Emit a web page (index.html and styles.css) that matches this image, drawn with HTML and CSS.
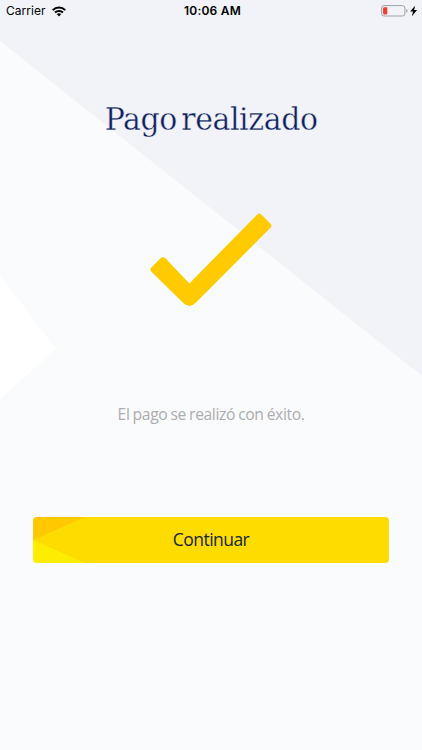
FILE: index.html
```html
<!DOCTYPE html>
<html lang="es">
<head>
<meta charset="utf-8">
<meta name="viewport" content="width=device-width, initial-scale=1">
<title>Pago realizado</title>
<link rel="stylesheet" href="styles.css">
</head>
<body>
<div class="screen">
  <svg class="backdrop" viewBox="0 0 422 750" aria-hidden="true">
    <path fill="#f2f3f8" d="M0 0H422V376L0 41Z"/>
    <path fill="#fff" d="M0 275L56 349L0 399Z"/>
  </svg>
  <header class="status">
    <div class="network">
      <span class="carrier">Carrier</span>
      <svg class="wifi" width="14" height="11" viewBox="0 0 14 11">
        <g fill="none" stroke="#000" stroke-width="2">
          <path d="M.7 4.1C4.2.7 9.8.7 13.3 4.1"/>
          <path d="M3 6.5C5.2 4.4 8.8 4.4 11 6.5"/>
        </g>
        <path d="M4.7 8.1Q7 6.2 9.3 8.1L7 10.6Z"/>
      </svg>
    </div>
    <time class="clock">10:06 AM</time>
    <svg class="battery" width="37" height="12" viewBox="0 0 37 12">
      <rect x=".6" y=".6" width="23.3" height="10.4" rx="2.4" fill="none" stroke="#a1a2a6" stroke-width="1"/>
      <rect x="2.1" y="2.2" width="4.2" height="7.2" rx=".8" fill="#f53b35"/>
      <path d="M25.2 4Q26.6 4.4 26.6 5.8T25.2 7.6Z" fill="#a1a2a6"/>
      <path d="M34 .8L29.2 6.6H32L30.9 11.2L36.1 5.1H33.2Z"/>
    </svg>
  </header>
  <main class="content">
    <h1 class="title">Pago realizado</h1>
    <svg class="check" width="122" height="94" viewBox="0 0 122 94">
      <path fill="#ffcb00" d="M1.2 54.7L10.6 45.3Q13 43 15.4 45.3L39.4 70.4L107.1 1.7Q109.3 -.5 111.5 1.7L120.3 10.5Q122.5 12.8 120.3 15L45.8 89.8Q39.4 96 33 89.8L1.2 58.4Q-.5 56.5 1.2 54.7Z"/>
    </svg>
    <p class="message">El pago se realizó con éxito.</p>
    <button class="continue" type="button"><span class="label">Continuar</span></button>
  </main>
</div>
</body>
</html>
```
FILE: styles.css
```css
* { box-sizing: border-box; }
body { margin: 0; }
.screen {
  position: relative;
  width: 422px;
  height: 750px;
  overflow: hidden;
  background: #fafbfd;
}
.backdrop {
  position: absolute;
  inset: 0;
  width: 100%;
  height: 100%;
}
.status {
  position: relative;
  display: grid;
  grid-template-columns: 1fr auto 1fr;
  align-items: center;
  height: 22px;
  padding: 0 4px 0 6px;
  font: 12px/22px Inter, sans-serif;
  color: #000;
}
.network { display: flex; align-items: center; gap: 6px; }
.carrier { letter-spacing: .05px; }
.clock { padding-left: 1px; font-weight: 600; letter-spacing: .2px; }
.battery { justify-self: end; }
.content {
  position: relative;
  display: flex;
  flex-direction: column;
  align-items: center;
  padding: 77px 33px 0;
}
.title {
  margin: 0;
  font: 400 31px/40px "DejaVu Serif Condensed", "DejaVu Serif", serif;
  font-stretch: condensed;
  letter-spacing: -.35px;
  word-spacing: -4.5px;
  white-space: nowrap;
  color: #0b205f;
  -webkit-text-stroke: .35px #f2f3f8;
  transform: scaleX(1.073);
}
.check { margin-top: 74px; }
.message {
  margin: 96px 0 0;
  font: 400 15.7px/22px "Open Sans", sans-serif;
  letter-spacing: -.4px;
  word-spacing: -.5px;
  white-space: nowrap;
  color: #adadb0;
}
.continue {
  width: 356px;
  height: 46px;
  margin-top: 92px;
  padding: 0 0 3px;
  border: 0;
  border-radius: 4px;
  background:
    linear-gradient(to bottom right, #ffc800 49.5%, transparent 50.5%) 0 0 / 52px 23px no-repeat,
    linear-gradient(to top right, #ffed00 49.5%, transparent 50.5%) 0 100% / 52px 23px no-repeat,
    #ffdc00;
  font: 400 17.5px/24px "Open Sans", sans-serif;
  letter-spacing: -.55px;
  color: #14263a;
}
```
